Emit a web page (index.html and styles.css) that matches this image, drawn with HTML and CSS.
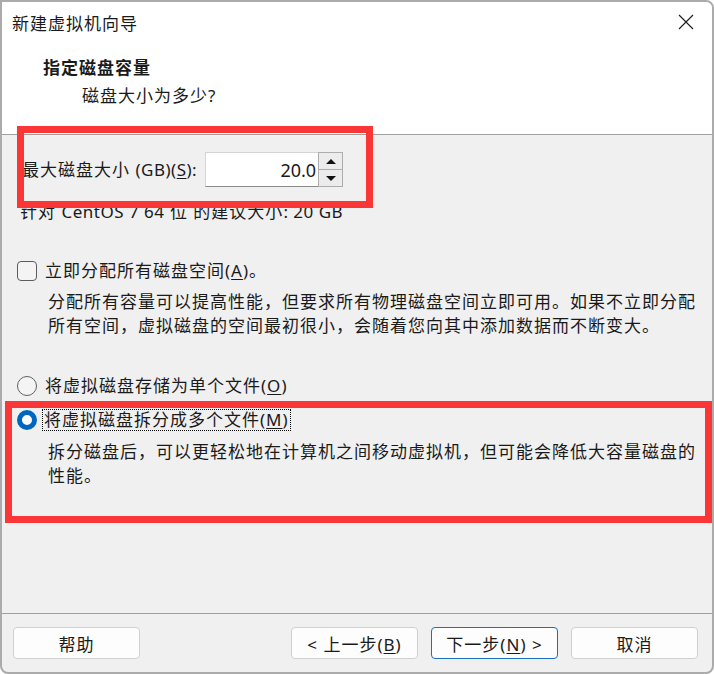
FILE: index.html
```html
<!DOCTYPE html>
<html>
<head>
<meta charset="UTF-8">
<title>新建虚拟机向导</title>
<link rel="stylesheet" href="styles.css">
</head>
<body>

<div class="window">
  <div class="titlebar">
    <span class="title">新建虚拟机向导</span>
    <svg class="close" width="16" height="16" viewBox="0 0 16 16"><path d="M1 1L15 15M15 1L1 15" stroke="#1a1a1a" stroke-width="1.1" fill="none"/></svg>
  </div>

  <div class="header">
    <div class="heading">指定磁盘容量</div>
    <div class="subheading">磁盘大小为多少?</div>
  </div>

  <div class="content">
    <div class="size-row">
      <span class="size-label">最大磁盘大小 <span class="latin">(GB)(<u>S</u>):</span></span>
      <div class="spin">
        <div class="spin-value">20.0</div>
        <div class="spin-buttons">
          <div class="spin-btn"><span class="tri-up"></span></div>
          <div class="spin-btn"><span class="tri-down"></span></div>
        </div>
      </div>
    </div>
    <div class="hint">针对 <span class="latin">CentOS 7 64</span> 位 的建议大小<span class="latin">: 20 GB</span></div>

    <div class="option check-row">
      <span class="checkbox"></span>
      <span>立即分配所有磁盘空间(<u>A</u>)。</span>
    </div>
    <p class="desc">分配所有容量可以提高性能，但要求所有物理磁盘空间立即可用。如果不立即分配所有空间，虚拟磁盘的空间最初很小，会随着您向其中添加数据而不断变大。</p>

    <div class="option radio-single">
      <span class="radio"></span>
      <span>将虚拟磁盘存储为单个文件(<u>O</u>)</span>
    </div>
    <div class="option radio-multi">
      <span class="radio checked"></span>
      <span class="focus">将虚拟磁盘拆分成多个文件(<u>M</u>)</span>
    </div>
    <p class="desc desc-split">拆分磁盘后，可以更轻松地在计算机之间移动虚拟机，但可能会降低大容量磁盘的性能。</p>
  </div>

  <div class="footer">
    <button class="btn">帮助</button>
    <div class="nav">
      <button class="btn">&lt; 上一步(<u>B</u>)</button>
      <button class="btn default">下一步(<u>N</u>) &gt;</button>
      <button class="btn">取消</button>
    </div>
  </div>

  <div class="mark mark-size"></div>
  <div class="mark mark-split"></div>
</div>

</body>
</html>
```

FILE: styles.css
```css
* {
  box-sizing: border-box;
}
html, body {
  margin: 0;
  padding: 0;
  background: #fff;
}
body {
  font-family: "Noto Sans", "Noto Sans CJK SC", sans-serif;
  font-size: 17px;
  letter-spacing: 1px;
  color: #1a1a1a;
}
u {
  text-decoration-thickness: 1px;
  text-underline-offset: 2px;
}
.latin {
  letter-spacing: 0.5px;
}
.window {
  position: relative;
  width: 714px;
  height: 674px;
  display: flex;
  flex-direction: column;
  border: 2px solid #ababab;
  border-radius: 0 8px 8px 8px;
  background: #f0f0f0;
  overflow: hidden;
}
.titlebar {
  height: 40px;
  display: flex;
  align-items: center;
  justify-content: space-between;
  padding: 0 18px 0 10px;
  background: #fff;
}
.close {
  display: block;
}
.header {
  height: 93px;
  padding: 14px 0 0 41px;
  background: #fff;
  border-bottom: 1px solid #a0a0a0;
}
.heading {
  line-height: 24px;
  font-weight: 700;
}
.subheading {
  line-height: 24px;
  margin: 4px 0 0 39px;
}
.content {
  flex: 1;
  padding: 17px 10px 0 15px;
  line-height: 24px;
}
.size-row {
  display: flex;
  align-items: center;
  height: 35px;
  padding-left: 5px;
  gap: 8px;
}
.spin {
  display: flex;
  width: 138px;
  height: 35px;
}
.spin-value {
  flex: 1;
  text-align: right;
  padding: 5px 2px 0 0;
  font-size: 18px;
  letter-spacing: 0;
  background: #fff;
  border: 1px solid #d4d4d4;
  border-bottom-color: #8a8a8a;
  border-right: 0;
}
.spin-buttons {
  width: 25px;
  display: flex;
  flex-direction: column;
  border: 1px solid #adadad;
}
.spin-btn {
  flex: 1;
  display: flex;
  align-items: center;
  justify-content: center;
  background: #ececec;
}
.spin-btn + .spin-btn {
  border-top: 1px solid #adadad;
}
.tri-up, .tri-down {
  width: 0;
  height: 0;
  border-left: 5px solid transparent;
  border-right: 5px solid transparent;
}
.tri-up {
  border-bottom: 5px solid #111;
}
.tri-down {
  border-top: 5px solid #111;
}
.hint {
  margin: 13px 0 0 3px;
}
.option {
  display: flex;
  align-items: center;
  gap: 8px;
  height: 24px;
}
.check-row {
  margin-top: 35px;
}
.checkbox {
  width: 20px;
  height: 20px;
  border: 1px solid #5c5c5c;
  border-radius: 4px;
  background: #f4f4f4;
}
.radio {
  width: 20px;
  height: 20px;
  border: 1px solid #606060;
  border-radius: 50%;
  background: #f4f4f4;
}
.radio.checked {
  border: 5.5px solid #0067c0;
  background: #fff;
}
.desc {
  margin: 7px 0 0 31px;
  line-height: 24px;
}
.radio-single {
  margin-top: 36px;
}
.radio-multi {
  margin-top: 10px;
}
.focus {
  display: inline-block;
  line-height: 20px;
  margin-left: -2px;
  padding: 0 1px;
  outline: 1px dotted #000;
}
.desc-split {
  margin-top: 8px;
}
.footer {
  display: flex;
  align-items: center;
  justify-content: space-between;
  height: 59px;
  padding: 0 14px 0 11px;
  border-top: 1px solid #a0a0a0;
}
.nav {
  display: flex;
  gap: 13px;
}
.btn {
  width: 127px;
  height: 32px;
  font: inherit;
  letter-spacing: 1px;
  color: #1a1a1a;
  background: #fdfdfd;
  border: 1px solid #d0d0d0;
  border-radius: 4px;
  padding: 0;
}
.btn.default {
  border-color: #1a6fc0;
}
.mark {
  position: absolute;
  border: 7px solid #fa3636;
}
.mark-size {
  left: 15px;
  top: 124px;
  width: 356px;
  height: 82px;
}
.mark-split {
  left: 3px;
  top: 399px;
  width: 707px;
  height: 122px;
}
```
